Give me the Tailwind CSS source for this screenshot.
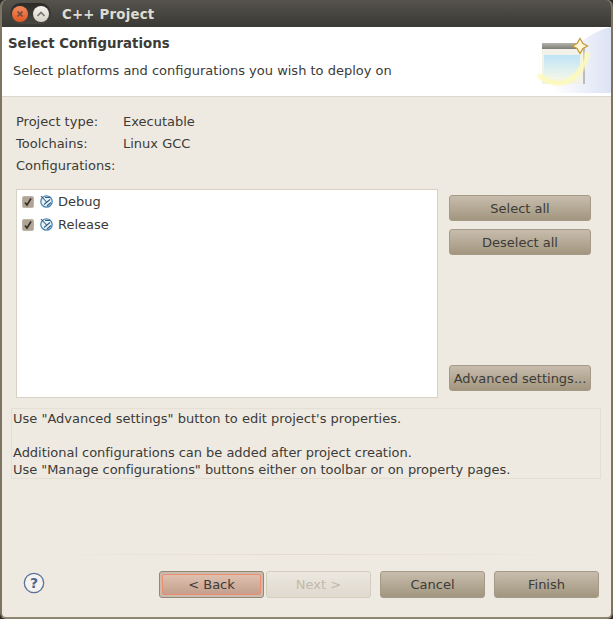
<!DOCTYPE html>
<html lang="en">
<head>
  <meta charset="UTF-8" />
  <title>C++ Project</title>
  <script src="https://cdn.jsdelivr.net/npm/@tailwindcss/browser@4"></script>
</head>
<body class="bg-[#2f2d29] overflow-hidden font-['DejaVu_Sans',sans-serif] text-[13px] leading-[16px] text-[#3c3b37]">
  <div class="w-[613px] h-[619px] flex flex-col bg-[#eeeae2] rounded-t-[6px] rounded-b-[6px] overflow-hidden border-x-2 border-b-2 border-x-[#7d7461] border-b-[#8f8672]">

    <!-- title bar -->
    <div class="h-[27px] -mx-[2px] shrink-0 flex items-center bg-gradient-to-b from-[#55534c] to-[#3a3934] pl-[10px]">
      <div class="w-[41px] h-[21px] rounded-full bg-gradient-to-b from-[#2c2b27] to-[#4a4843] flex items-center justify-between px-[2px]">
        <div class="w-[16px] h-[16px] rounded-full bg-gradient-to-b from-[#f08a5c] to-[#e2561f] flex items-center justify-center">
          <svg width="8" height="8" viewBox="0 0 8 8"><path d="M1.500 1.500l5 5M6.500 1.500l-5 5" stroke="#6b4a3a" stroke-width="1.600"/></svg>
        </div>
        <div class="w-[16px] h-[16px] rounded-full bg-gradient-to-b from-[#f6f4ee] to-[#d6d2c8] flex items-center justify-center">
          <svg width="10" height="6" viewBox="0 0 10 6"><path d="M1.500 5L5 1.500 8.500 5" fill="none" stroke="#77746b" stroke-width="1.600"/></svg>
        </div>
      </div>
      <span class="ml-[11px] pt-[2px] font-bold text-[13.33px] text-[#dfdbd2] tracking-[0.2px]">C++ Project</span>
    </div>

    <!-- banner -->
    <div class="h-[69px] -ml-[2px] shrink-0 bg-white flex justify-between">
      <div class="pl-[8px] pt-[9px]">
        <div class="font-bold text-[13.33px]">Select Configurations</div>
        <div class="pl-[5px] mt-[11px]">Select platforms and configurations you wish to deploy on</div>
      </div>
      <svg width="76" height="69" viewBox="0 0 76 69" class="shrink-0">
        <defs>
          <linearGradient id="sky" x1="0" y1="0" x2="0" y2="1"><stop offset="0" stop-color="#bfe4f7"/><stop offset="1" stop-color="#f3f7e8"/></linearGradient>
          <linearGradient id="bar" x1="0" y1="0" x2="0" y2="1"><stop offset="0" stop-color="#b4b4ae"/><stop offset="1" stop-color="#7d7d75"/></linearGradient>
          <linearGradient id="haze" x1="0" y1="0" x2="1" y2="0"><stop offset="0" stop-color="#ffffff"/><stop offset="1" stop-color="#dde3f5"/></linearGradient>
          <filter id="soft"><feGaussianBlur stdDeviation="1.200"/></filter>
        </defs>
        <path d="M18 66C22 30 50 6 76 0V66Z" fill="url(#haze)"/>
        <rect x="7" y="16" width="41" height="41" fill="#f2f2ea"/>
        <rect x="7" y="16" width="41" height="6" fill="url(#bar)"/>
        <rect x="9" y="28" width="36" height="24" fill="url(#sky)"/>
        <rect x="48" y="21" width="2" height="36" fill="#a5a59f" opacity="0.7"/>
        <path d="M3 48C18 60 34 58 43 46C49 39 52 32 52 25" fill="none" stroke="#fdf9bb" stroke-width="5" filter="url(#soft)"/>
        <path d="M45 11.500L48 16.500L52.500 19L48 21.500L45 26.500L42 21.500L37.500 19L42 16.500Z" fill="#fff7d6" stroke="#c49a3a" stroke-width="1.300"/>
      </svg>
    </div>
    <div class="h-px -ml-[2px] shrink-0 bg-[#dcd7cb]"></div>

    <!-- project info -->
    <div class="pl-[14px] pt-[17px] h-[92px] shrink-0 flex flex-col">
      <div class="flex h-[22px]"><span class="w-[107px]">Project type:</span><span>Executable</span></div>
      <div class="flex h-[22px]"><span class="w-[107px]">Toolchains:</span><span>Linux GCC</span></div>
      <div class="flex h-[22px]"><span>Configurations:</span></div>
    </div>

    <!-- configurations -->
    <div class="flex h-[209px] shrink-0 pl-[14px]">
      <div class="w-[422px] h-full bg-white border border-[#d8d2c4] pl-[5px]">
        <div class="flex items-center h-[23px]">
          <span class="w-[12px] h-[12px] rounded-[2px] bg-[#b0a594] border border-[#bfb5a6] flex items-center justify-center"><svg width="10" height="10" viewBox="0 0 10 10"><path d="M2 5.500l2 2.500 4-6.500" fill="none" stroke="#33302a" stroke-width="1.600"/></svg></span>
          <svg class="ml-[6px]" width="13" height="13" viewBox="0 0 13 13"><circle cx="6.500" cy="6.500" r="5.700" fill="#eaf3f9" stroke="#4a86b2" stroke-width="1.300"/><path d="M1 1L7 7.500M4 9.500L10 4.500M7 11L11 7.500M5 2.500H10" stroke="#2f5f86" stroke-width="1.100"/></svg>
          <span class="ml-[5px]">Debug</span>
        </div>
        <div class="flex items-center h-[23px]">
          <span class="w-[12px] h-[12px] rounded-[2px] bg-[#b0a594] border border-[#bfb5a6] flex items-center justify-center"><svg width="10" height="10" viewBox="0 0 10 10"><path d="M2 5.500l2 2.500 4-6.500" fill="none" stroke="#33302a" stroke-width="1.600"/></svg></span>
          <svg class="ml-[6px]" width="13" height="13" viewBox="0 0 13 13"><circle cx="6.500" cy="6.500" r="5.700" fill="#eaf3f9" stroke="#4a86b2" stroke-width="1.300"/><path d="M1 1L7 7.500M4 9.500L10 4.500M7 11L11 7.500M5 2.500H10" stroke="#2f5f86" stroke-width="1.100"/></svg>
          <span class="ml-[5px]">Release</span>
        </div>
      </div>
      <div class="ml-[11px] w-[142px] pt-[6px] flex flex-col">
        <button class="h-[26px] pt-[1px] rounded-[3px] border border-[#a59a88] bg-gradient-to-b from-[#c8bdad] to-[#a2967f]">Select all</button>
        <button class="h-[26px] pt-[1px] mt-[8px] rounded-[3px] border border-[#a59a88] bg-gradient-to-b from-[#c8bdad] to-[#a2967f]">Deselect all</button>
        <button class="h-[26px] pt-[1px] mt-[110px] rounded-[3px] border border-[#a59a88] bg-gradient-to-b from-[#c8bdad] to-[#a2967f] whitespace-nowrap">Advanced settings...</button>
      </div>
    </div>

    <!-- hint -->
    <div class="ml-[9px] mt-[10px] w-[590px] h-[71px] shrink-0 border border-[#e3dfd3] pl-[1px] pt-[1px] leading-[17px]">
      <div>Use "Advanced settings" button to edit project's properties.</div>
      <div class="h-[17px]"></div>
      <div class="tracking-[-0.03px]">Additional configurations can be added after project creation.</div>
      <div class="tracking-[-0.05px]">Use "Manage configurations" buttons either on toolbar or on property pages.</div>
    </div>

    <!-- footer -->
    <div class="mt-[75px] h-px mx-[36px] shrink-0 bg-gradient-to-r from-[#eeeae2] via-[#e2dccb] to-[#eeeae2]"></div>
    <div class="mt-[16px] flex items-center shrink-0 pl-[21px]">
      <svg class="self-start mt-[1px]" width="22" height="22" viewBox="0 0 22 22"><circle cx="11" cy="11" r="9.700" fill="#f4f3f0" stroke="#5b7198" stroke-width="1.300"/><text x="11" y="16" text-anchor="middle" font-family="DejaVu Sans" font-weight="700" font-size="14" fill="#4f658c">?</text></svg>
      <div class="ml-[114px] flex">
        <button class="w-[105px] h-[27px] rounded-[3px] border border-[#928875] p-[2px] bg-[#c8bdad]"><span class="block h-full rounded-[2px] border border-[#f08a70] bg-gradient-to-b from-[#dfc0ae] to-[#c2a08d] leading-[19px]">&lt; Back</span></button>
        <button class="w-[105px] h-[27px] ml-[2px] rounded-[3px] border border-[#d3cdc0] bg-gradient-to-b from-[#ece8e0] to-[#dfd9ce] text-[#c2b9a9]">Next &gt;</button>
        <button class="w-[105px] h-[27px] ml-[9px] rounded-[3px] border border-[#a59a88] bg-gradient-to-b from-[#c8bdad] to-[#a2967f]">Cancel</button>
        <button class="w-[105px] h-[27px] ml-[9px] rounded-[3px] border border-[#a59a88] bg-gradient-to-b from-[#c8bdad] to-[#a2967f]">Finish</button>
      </div>
    </div>
  </div>
</body>
</html>
